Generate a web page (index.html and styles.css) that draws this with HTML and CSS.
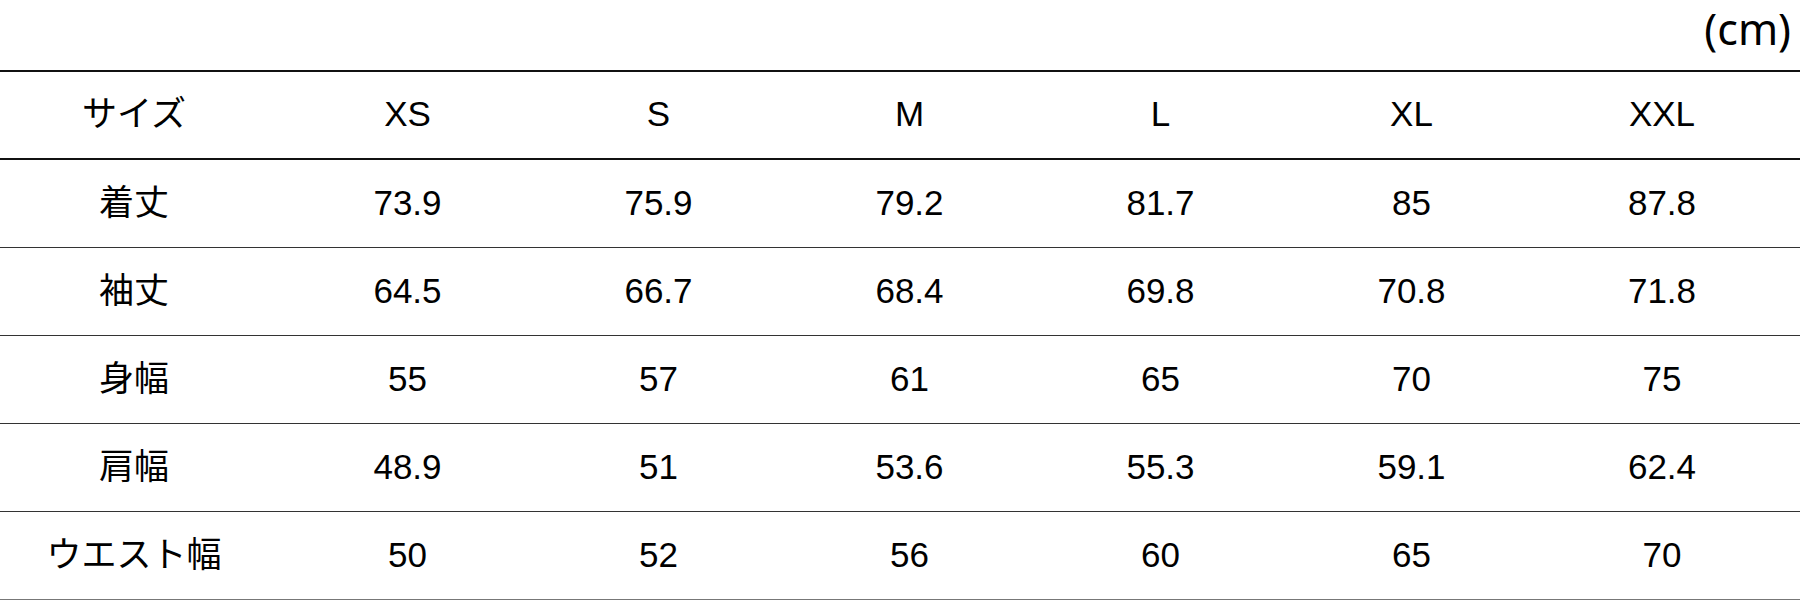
FILE: index.html
```html
<!DOCTYPE html>
<html lang="ja">
<head>
<meta charset="utf-8">
<title>サイズ表</title>
<link rel="stylesheet" href="styles.css">
</head>
<body>
<div class="unit">(cm)</div>
<table class="size-table">
  <colgroup>
    <col class="c-label">
    <col class="c-size">
    <col class="c-size">
    <col class="c-size">
    <col class="c-size">
    <col class="c-size">
    <col class="c-last">
  </colgroup>
  <thead>
    <tr><th>サイズ</th><th>XS</th><th>S</th><th>M</th><th>L</th><th>XL</th><th>XXL</th></tr>
  </thead>
  <tbody>
    <tr><th>着丈</th><td>73.9</td><td>75.9</td><td>79.2</td><td>81.7</td><td>85</td><td>87.8</td></tr>
    <tr><th>袖丈</th><td>64.5</td><td>66.7</td><td>68.4</td><td>69.8</td><td>70.8</td><td>71.8</td></tr>
    <tr><th>身幅</th><td>55</td><td>57</td><td>61</td><td>65</td><td>70</td><td>75</td></tr>
    <tr><th>肩幅</th><td>48.9</td><td>51</td><td>53.6</td><td>55.3</td><td>59.1</td><td>62.4</td></tr>
    <tr><th>ウエスト幅</th><td>50</td><td>52</td><td>56</td><td>60</td><td>65</td><td>70</td></tr>
  </tbody>
</table>
</body>
</html>
```
FILE: styles.css
```css
html, body {
  margin: 0;
  padding: 0;
  background: #fff;
  color: #000;
}

.unit {
  font-family: "Noto Sans", "Open Sans", sans-serif;
  font-size: 43px;
  line-height: 57px;
  height: 57px;
  padding-bottom: 13px;
  padding-right: 9px;
  text-align: right;
}

.size-table {
  width: 1800px;
  table-layout: fixed;
  border-collapse: collapse;
  font-family: "Liberation Sans", "Noto Sans CJK JP", sans-serif;
  font-size: 35px;
  line-height: 40px;
}

.c-label { width: 282px; }
.c-size { width: 251px; }
.c-last { width: 263px; }

.size-table th,
.size-table td {
  box-sizing: border-box;
  height: 88px;
  padding: 0;
  font-weight: normal;
  text-align: center;
  vertical-align: middle;
  border-bottom: 1px solid #333;
}

.size-table tr > :first-child { padding-right: 14px; }
.size-table tr > :last-child { padding-right: 13px; }

.size-table thead th {
  padding-bottom: 3px;
  border-top: 2px solid #111;
  border-bottom: 2px solid #111;
}

.size-table tbody tr:last-child th,
.size-table tbody tr:last-child td {
  border-bottom: 1px solid #777;
}
```
